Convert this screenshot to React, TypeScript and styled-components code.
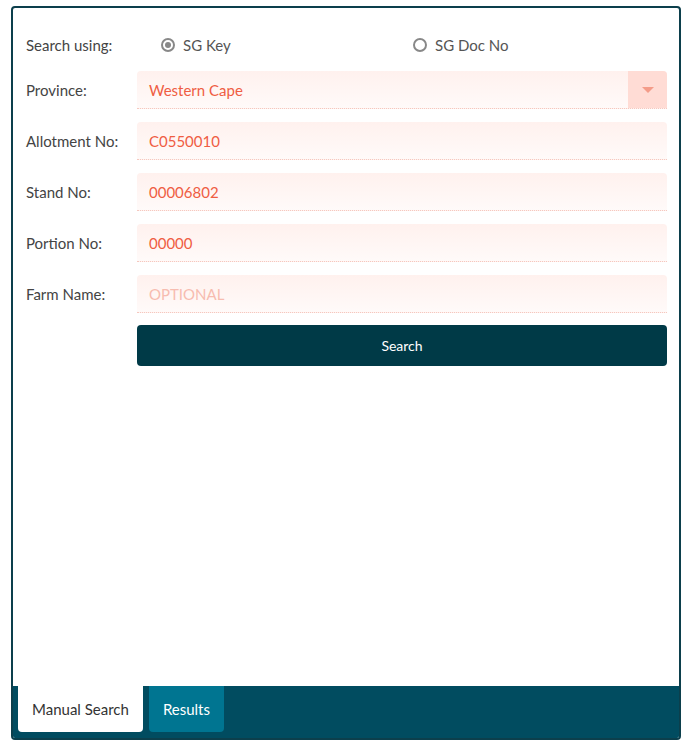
import React from "react";
import styled, { createGlobalStyle } from "styled-components";

const Global = createGlobalStyle`
  html, body { margin: 0; background: #fff; }
  body { padding: 6px 7px 7px 11px; font-family: Lato, "Open Sans", sans-serif; }
`;

const Frame = styled.div`
  height: 734px; box-sizing: border-box;
  border: 2px solid #0c3f4c; border-radius: 4px;
  display: flex; flex-direction: column; overflow: hidden;
`;
const Body = styled.div`
  flex: 1; padding: 16px 12px 0 13px; display: flex; flex-direction: column; gap: 13px;
`;
const Row = styled.div`
  display: flex; align-items: center; height: 38px;
`;
const Label = styled.div`
  width: 111px; font-size: 15px; color: #444;
`;
const Radio = styled.label<{ $w?: number }>`
  display: flex; align-items: center; gap: 8px; width: ${p => p.$w ?? 0}px;
  font-size: 15px; color: #555; padding-left: 24px; box-sizing: border-box;
`;
const Dot = styled.span<{ $on?: boolean }>`
  width: 14px; height: 14px; border-radius: 50%; border: 2px solid #888; box-sizing: border-box;
  display: flex; align-items: center; justify-content: center;
  &::after { content: ""; width: 6px; height: 6px; border-radius: 50%; background: ${p => p.$on ? "#888" : "transparent"}; }
`;
const Field = styled.div`
  flex: 1; height: 38px; display: flex; align-items: center; box-sizing: border-box;
  background: linear-gradient(#fff1ee, #fffaf9); border-bottom: 1px dotted #f5c8bf;
  border-radius: 4px 4px 0 0; padding-left: 12px; font-size: 15px; color: #ef5d43;
`;
const Placeholder = styled.span` color: #f7bcb0; `;
const Caret = styled.div`
  margin-left: auto; width: 39px; height: 100%; background: #ffdcd5; border-radius: 0 4px 0 0;
  display: flex; align-items: center; justify-content: center;
  &::after { content: ""; border: 6px solid transparent; border-top: 6px solid #f49c89; border-bottom: 0; }
`;
const Button = styled.button`
  margin-left: 111px; height: 41px; background: #003a47; color: #fff; border: 0; border-radius: 4px;
  font-family: inherit; font-size: 14px; margin-top: -1px;
`;
const Tabs = styled.div`
  height: 52px; background: #014c60; display: flex; gap: 6px; padding-left: 5px; align-items: flex-start;
`;
const Tab = styled.div<{ $active?: boolean }>`
  height: 46px; padding: 0 14px; display: flex; align-items: center; font-size: 15px;
  border-radius: 0 0 4px 4px;
  background: ${p => p.$active ? "#fff" : "#007591"}; color: ${p => p.$active ? "#333" : "#fff"};
`;

export default function App() {
  return (
    <>
      <Global />
      <Frame>
        <Body>
          <Row style={{ height: 42, marginBottom: -8 }}>
            <Label>Search using:</Label>
            <Radio $w={252}><Dot $on />SG Key</Radio>
            <Radio $w={200}><Dot />SG Doc No</Radio>
          </Row>
          <Row><Label>Province:</Label><Field>Western Cape<Caret /></Field></Row>
          <Row><Label>Allotment No:</Label><Field>C0550010</Field></Row>
          <Row><Label>Stand No:</Label><Field>00006802</Field></Row>
          <Row><Label>Portion No:</Label><Field>00000</Field></Row>
          <Row><Label>Farm Name:</Label><Field><Placeholder>OPTIONAL</Placeholder></Field></Row>
          <Button>Search</Button>
        </Body>
        <Tabs>
          <Tab $active>Manual Search</Tab>
          <Tab>Results</Tab>
        </Tabs>
      </Frame>
    </>
  );
}
